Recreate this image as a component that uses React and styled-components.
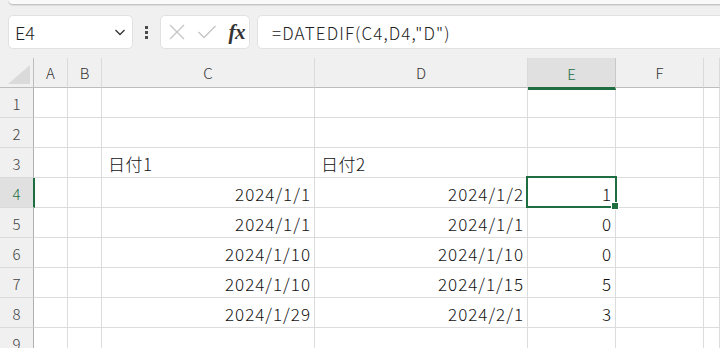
import React from "react";
import styled, { createGlobalStyle } from "styled-components";

const Global = createGlobalStyle`
  html, body { margin: 0; padding: 0; }
  body {
    background: #f0f0f0;
    font-family: "Noto Sans CJK JP", "Noto Sans", sans-serif;
    overflow: hidden;
  }
`;

const Page = styled.div`
  width: 720px;
  height: 348px;
  overflow: hidden;
  background: #f0f0f0;
  display: flex;
  flex-direction: column;
  & > * { flex-shrink: 0; }
`;

const RibbonEdge = styled.div`
  height: 4px;
  margin-left: 9px;
  margin-right: -10px;
  background: #fafafa;
  border-radius: 0 0 8px 8px;
  box-shadow: 0 1px 2px rgba(0, 0, 0, 0.25);
`;

const FormulaBar = styled.div`
  display: flex;
  align-items: center;
  height: 34px;
  margin-top: 11px;
  padding-left: 8px;
`;

const Box = styled.div`
  height: 34px;
  box-sizing: border-box;
  background: #fff;
  border: 1px solid #e1e1e1;
  border-radius: 5px;
  display: flex;
  align-items: center;
`;

const NameBox = styled(Box)`
  width: 125px;
  padding: 0 5px 0 6px;
  justify-content: space-between;
  font-size: 18px;
  font-weight: 300;
  color: #222;
`;

const Dots = styled.div`
  width: 27px;
  display: flex;
  flex-direction: column;
  align-items: center;
  gap: 2px;
  & span {
    width: 3px;
    height: 3px;
    background: #4a4a4a;
    display: block;
  }
`;

const FxBox = styled(Box)`
  width: 90px;
  padding: 0 4px 0 7px;
  justify-content: space-between;
`;

const FxLabel = styled.span`
  font-family: "Liberation Serif", "DejaVu Serif", serif;
  font-style: italic;
  font-weight: bold;
  font-size: 21px;
  color: #333;
  letter-spacing: -0.5px;
  margin-top: 1px;
`;

const FormulaInput = styled(Box)`
  flex: 1;
  margin-left: 7px;
  margin-right: -10px;
  padding-left: 14px;
  font-size: 17px;
  font-weight: 300;
  color: #222;
  letter-spacing: 1.1px;
`;

const Sheet = styled.div`
  margin-top: 9px;
  display: grid;
  grid-template-columns: 34px 34px 34px 213px 213px 88px 88px 1fr;
  grid-auto-rows: 30px;
  background: #fff;
`;

const Corner = styled.div`
  background: #f0f0f0;
  border-right: 1px solid #bdbdbd;
  border-bottom: 1px solid #bdbdbd;
  position: relative;
  &::after {
    content: "";
    position: absolute;
    right: 3px;
    bottom: 3px;
    width: 0;
    height: 0;
    border-left: 22px solid transparent;
    border-bottom: 19px solid #dadada;
  }
`;

const ColHead = styled.div`
  background: ${(p) => (p.$active ? "#e0e0e0" : "#f0f0f0")};
  border-right: 1px solid ${(p) => (p.$active ? "#c8c8c8" : "#dadada")};
  border-bottom: ${(p) => (p.$active ? "3px solid #1e6e42" : "1px solid #bdbdbd")};
  margin-bottom: ${(p) => (p.$active ? "-2px" : "0")};
  position: relative;
  z-index: ${(p) => (p.$active ? 1 : 0)};
  display: flex;
  align-items: center;
  justify-content: center;
  font-size: 15px;
  font-weight: 300;
  color: ${(p) => (p.$active ? "#1e6e42" : "#333")};
  box-sizing: border-box;
  padding-top: ${(p) => (p.$active ? "2px" : "0")};
`;

const RowHead = styled.div`
  background: ${(p) => (p.$active ? "#e0e0e0" : "#f0f0f0")};
  border-right: ${(p) => (p.$active ? "2px solid #1e6e42" : "1px solid #b0b0b0")};
  margin-right: ${(p) => (p.$active ? "-1px" : "0")};
  border-bottom: 1px solid #dadada;
  display: flex;
  align-items: center;
  justify-content: center;
  padding-top: 2px;
  font-size: 15px;
  font-weight: 300;
  color: ${(p) => (p.$active ? "#1e6e42" : "#444")};
  position: relative;
  z-index: ${(p) => (p.$active ? 1 : 0)};
`;

const Cell = styled.div`
  border-right: 1px solid #dcdcdc;
  border-bottom: 1px solid #dcdcdc;
  display: flex;
  align-items: center;
  justify-content: ${(p) => (p.$right ? "flex-end" : "flex-start")};
  padding: 2px 3px 0 6px;
  font-size: 17px;
  font-weight: 300;
  letter-spacing: ${(p) => (p.$right ? "1px" : "0.5px")};
  color: #111;
  white-space: nowrap;
  position: relative;
  box-sizing: border-box;
`;

const Selection = styled.div`
  position: absolute;
  left: -2px;
  top: -2px;
  right: -2px;
  bottom: -1px;
  border: 2px solid #1e6e42;
  pointer-events: none;
  z-index: 2;
  &::after {
    content: "";
    position: absolute;
    right: -4px;
    bottom: -4px;
    width: 6px;
    height: 6px;
    background: #1e6e42;
    border: 1px solid #fff;
  }
`;

const cols = ["A", "B", "C", "D", "E", "F", ""];
const data = {
  3: { C: "日付1", D: "日付2" },
  4: { C: "2024/1/1", D: "2024/1/2", E: "1" },
  5: { C: "2024/1/1", D: "2024/1/1", E: "0" },
  6: { C: "2024/1/10", D: "2024/1/10", E: "0" },
  7: { C: "2024/1/10", D: "2024/1/15", E: "5" },
  8: { C: "2024/1/29", D: "2024/2/1", E: "3" },
};

function Chevron() {
  return (
    <svg width="14" height="14" viewBox="0 0 14 14">
      <path d="M2.5 5 L7 9.5 L11.5 5" fill="none" stroke="#333" strokeWidth="1.3" />
    </svg>
  );
}

function CrossIcon() {
  return (
    <svg width="18" height="18" viewBox="0 0 18 18">
      <path d="M2 2 L16 16 M16 2 L2 16" stroke="#c4c4c4" strokeWidth="1.3" fill="none" />
    </svg>
  );
}

function CheckIcon() {
  return (
    <svg width="20" height="18" viewBox="0 0 20 18">
      <path d="M1.5 9 L7 14.5 L18.5 3" stroke="#c4c4c4" strokeWidth="1.3" fill="none" />
    </svg>
  );
}

export default function App() {
  const rows = [];
  for (let r = 1; r <= 9; r++) {
    const active = r === 4;
    rows.push(
      <RowHead key={`h${r}`} $active={active}>
        {r}
      </RowHead>
    );
    cols.forEach((c) => {
      const v = data[r] && data[r][c];
      const right = v && !v.startsWith("日付");
      rows.push(
        <Cell key={`${c}${r}`} $right={right}>
          {v}
          {r === 4 && c === "E" && <Selection />}
        </Cell>
      );
    });
  }
  return (
    <Page>
      <Global />
      <RibbonEdge />
      <FormulaBar>
        <NameBox>
          <span>E4</span>
          <Chevron />
        </NameBox>
        <Dots>
          <span />
          <span />
          <span />
        </Dots>
        <FxBox>
          <CrossIcon />
          <CheckIcon />
          <FxLabel>fx</FxLabel>
        </FxBox>
        <FormulaInput>=DATEDIF(C4,D4,"D")</FormulaInput>
      </FormulaBar>
      <Sheet>
        <Corner />
        {cols.map((c, i) => (
          <ColHead key={i} $active={c === "E"}>
            {c}
          </ColHead>
        ))}
        {rows}
      </Sheet>
    </Page>
  );
}
